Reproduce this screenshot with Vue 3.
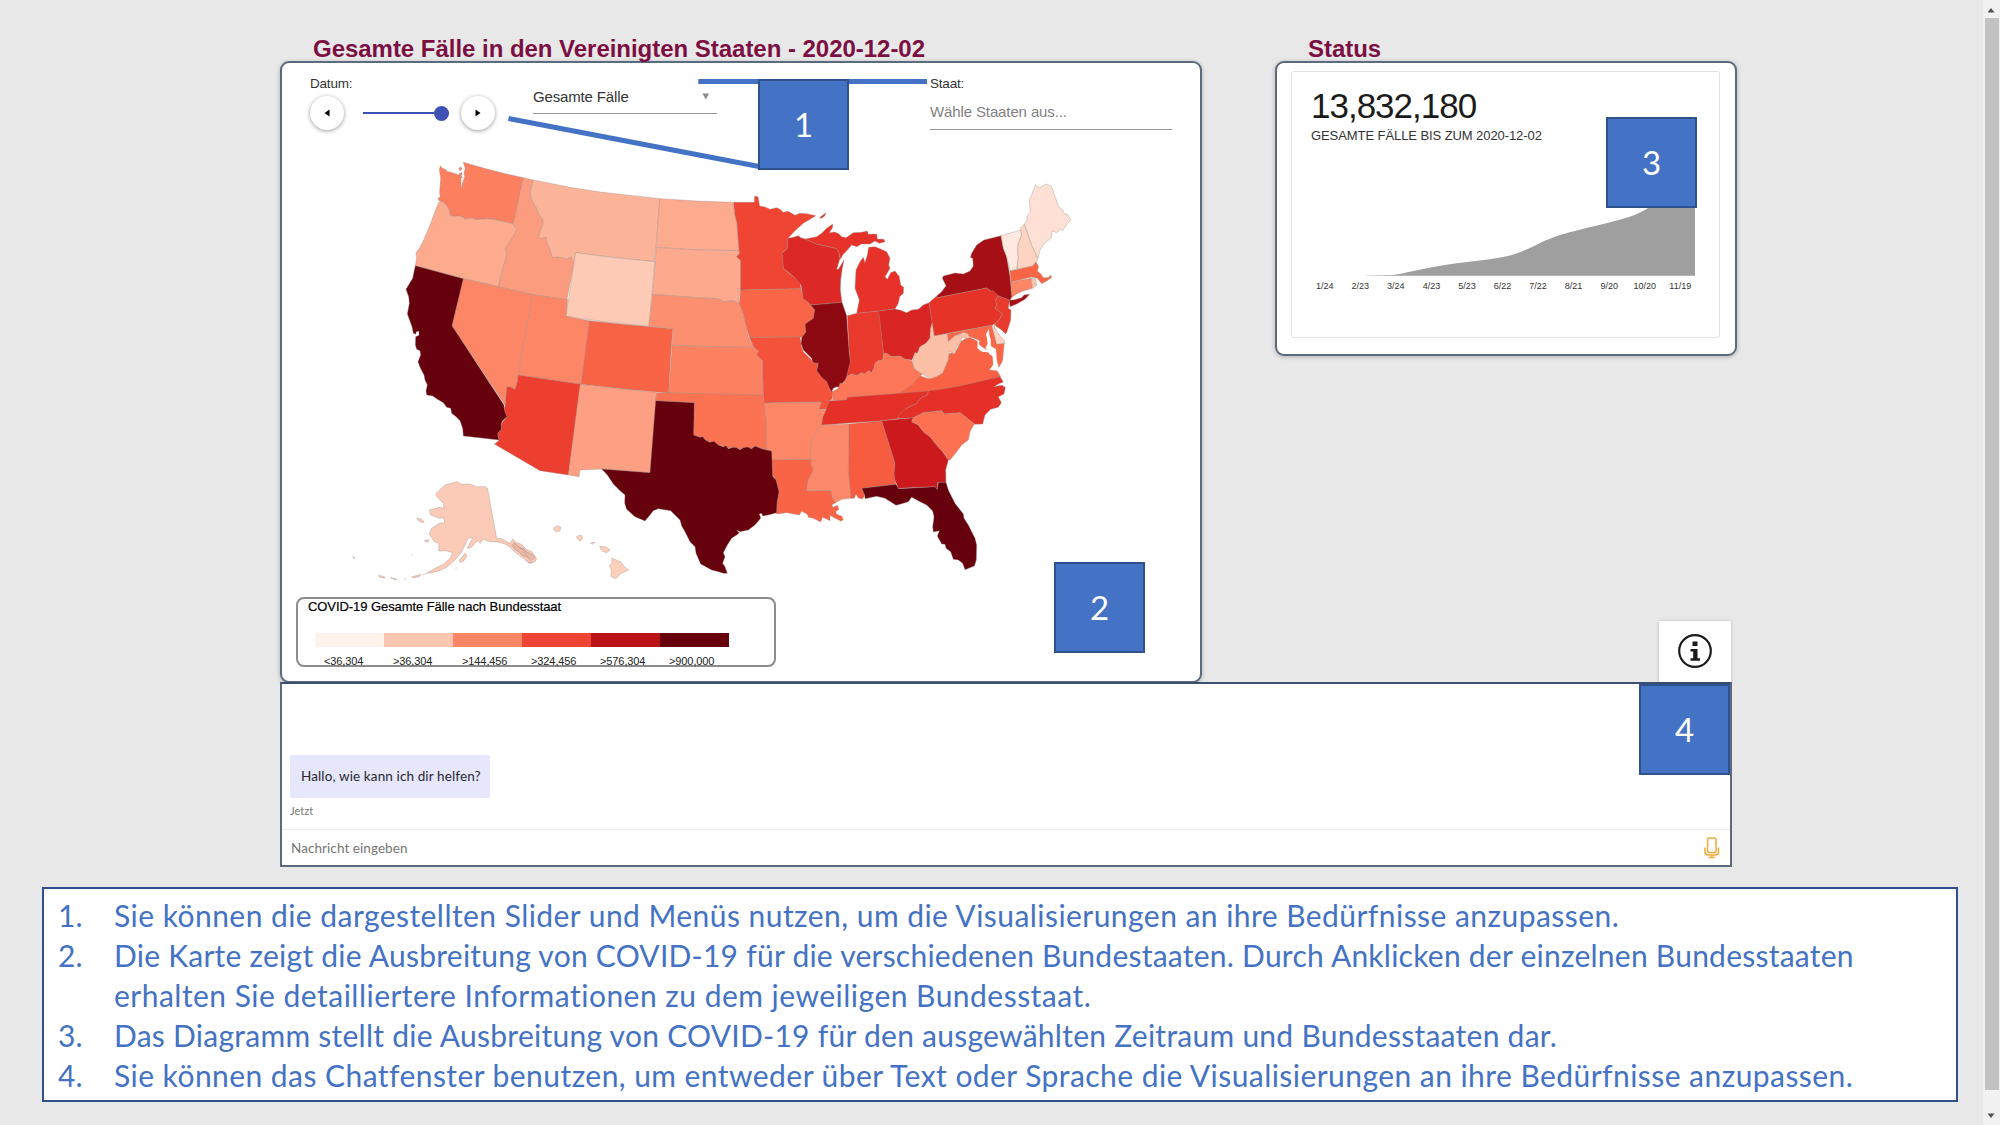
<script setup>
// Each region is traced on its own tile at three units per pixel; `tile` is the tile's top-left corner.
const tiles = { w: [400, 150], m: [640, 170], e: [840, 170], s: [640, 380], a: [340, 450] }
const place = (t) => `translate(${tiles[t][0]} ${tiles[t][1]}) scale(0.33333)`

const states = [
  { id: 'WA', tile: 'w', fill: '#fc7f5f', d: 'M121,48 L128,55 135,58 143,65 150,66 168,72 180,75 187,82 183,100 183,116 188,98 194,80 192,68 196,55 190,37 250,54 310,70 370,83 340,222 310,215 285,209 262,206 230,209 215,205 195,207 185,200 172,198 158,198 150,196 147,178 138,164 128,156 118,153 114,146 120,140 119,125 122,85 118,60Z M176,56 l6,-6 4,8 -6,4Z M178,70 l8,-2 0,8 -6,0Z' },
  { id: 'OR', tile: 'w', fill: '#fcab8f', d: 'M116,157 L128,156 138,164 147,178 150,196 158,198 172,198 185,200 195,207 215,205 230,209 262,206 285,209 340,222 351,238 343,255 335,268 326,282 316,298 322,308 295,410 190,386 46,347 50,325 48,308 60,292 72,268 90,225 105,185Z' },
  { id: 'ID', tile: 'w', fill: '#fc9c7f', d: 'M370,83 L400,90 391,125 393,140 398,155 408,170 414,188 429,210 430,222 420,245 416,260 425,266 438,261 441,275 450,300 458,322 475,321 485,323 500,327 513,319 517,330 523,335 501,449 398,434 295,410 322,308 316,298 326,282 335,268 343,255 351,238 340,222Z' },
  { id: 'MT', tile: 'w', fill: '#fcb499', d: 'M400,90 L510,112 600,126 780,146 764,335 640,322 527,308 523,335 517,330 513,319 500,327 485,323 475,321 458,322 450,300 441,275 438,261 425,266 416,260 420,245 430,222 429,210 414,188 408,170 398,155 393,140 391,125Z' },
  { id: 'WY', tile: 'w', fill: '#fdcab5', d: 'M527,308 L640,323 764,335 747,529 610,515 498,499Z' },
  { id: 'NV', tile: 'w', fill: '#fc8666', d: 'M190,386 L295,410 398,434 355,675 352,695 345,718 332,711 320,711 315,765 156,527Z' },
  { id: 'UT', tile: 'w', fill: '#fc8666', d: 'M398,434 L503,449 498,499 568,512 543,703 355,675Z' },
  { id: 'CO', tile: 'w', fill: '#f96346', d: 'M568,512 L660,522 818,536 812,620 806,729 690,719 543,703Z' },
  { id: 'AZ', tile: 'w', fill: '#ed3f2f', d: 'M355,675 L543,703 505,975 420,962 283,882 292,876 297,870 293,850 304,838 303,822 321,800 313,783 316,762 320,711 332,711 345,718 352,695Z' },
  { id: 'NM', tile: 'w', fill: '#fc9f82', d: 'M540,703 L690,719 769,727 768,752 757,900 750,968 605,957 540,960 537,980 505,975Z' },
  { id: 'CA', tile: 'w', fill: '#67000d', d: 'M46,347 L190,386 156,527 312,765 314,783 321,800 308,812 303,822 304,838 293,850 297,870 190,858 188,835 180,812 170,802 155,790 152,775 140,772 130,758 112,748 98,738 80,735 78,722 82,705 75,690 72,675 60,652 54,635 62,615 60,602 50,598 46,585 47,560 57,556 57,544 49,545 47,553 40,550 36,530 22,492 28,460 26,440 18,418 38,385 41,370Z' },
  { id: 'ND', tile: 'm', fill: '#fcab8f', d: 'M59,86 L170,93 278,97 281,115 285,135 291,160 293,190 298,242 170,240 49,232Z' },
  { id: 'SD', tile: 'm', fill: '#fca98d', d: 'M49,232 L170,240 298,242 290,260 302,272 302,360 297,385 298,402 285,394 275,392 250,395 240,388 228,386 130,380 37,373Z' },
  { id: 'NE', tile: 'm', fill: '#fc8f6f', d: 'M37,373 L130,380 228,386 240,388 250,395 275,392 285,394 298,402 310,430 315,455 322,480 325,500 342,532 220,530 96,526 98,476 27,469Z' },
  { id: 'KS', tile: 'm', fill: '#fc8262', d: 'M96,526 L220,530 342,532 356,543 350,555 368,572 370,677 230,674 86,669Z' },
  { id: 'MN', tile: 'm', fill: '#f04533', d: 'M280,97 L343,97 344,78 354,80 359,108 375,111 390,118 410,113 420,118 430,127 445,124 465,136 480,130 500,131 528,137 490,160 465,182 444,205 442,235 428,247 430,295 445,308 462,320 480,338 483,356 390,358 302,360 302,272 290,260 298,250 293,190 291,160 285,135Z' },
  { id: 'IA', tile: 'm', fill: '#f96547', d: 'M302,360 L483,356 488,375 490,388 500,393 512,405 524,420 520,445 495,462 500,478 495,490 490,503 480,501 328,502 322,480 315,455 310,430 298,402Z' },
  { id: 'MO', tile: 'm', fill: '#f5523b', d: 'M328,502 L480,501 485,530 490,545 515,570 518,578 535,580 530,602 560,635 570,660 580,665 576,688 568,692 562,718 537,718 543,696 372,699 370,675 368,572 350,555 356,543 342,532Z' },
  { id: 'WI', tile: 'm', fill: '#dc2925', d: 'M444,205 L460,202 475,197 482,203 495,207 510,213 530,222 575,232 590,236 597,248 600,265 595,282 590,298 596,297 612,270 606,300 602,330 601,360 606,397 512,405 500,393 490,388 483,345 462,320 430,295 428,260 426,250 442,235Z' },
  { id: 'IL', tile: 'm', fill: '#8d0912', d: 'M512,405 L606,397 620,437 628,550 632,575 626,600 618,630 608,638 607,655 590,650 580,655 575,665 568,655 560,635 545,622 530,602 535,580 518,578 515,565 490,540 483,520 485,503 498,485 495,462 520,445 524,420Z' },
  { id: 'MI', tile: 'm', fill: '#e63228', d: 'M495,207 L530,200 545,190 560,175 578,162 578,172 568,188 585,186 597,192 605,200 618,203 640,188 665,187 682,183 685,193 710,192 712,207 732,208 735,215 718,220 705,213 690,222 665,222 650,230 635,225 622,240 608,255 602,268 597,248 590,236 575,232 530,222Z M540,142 l18,-14 -4,10 -12,8Z M686,232 L705,230 720,236 740,245 750,265 746,285 750,295 735,320 742,328 752,308 765,303 778,320 782,345 791,352 790,370 779,380 775,400 765,417 718,423 650,430 658,390 645,355 648,300 660,275 670,262 675,278 682,255Z' },
  { id: 'IN', tile: 'e', fill: '#ea3a2d', d: 'M22,437 L50,430 118,423 131,550 128,570 115,572 105,580 102,595 95,608 85,602 75,612 65,608 50,617 35,612 20,620 31,575 28,550Z' },
  { id: 'OH', tile: 'e', fill: '#d92523', d: 'M116,423 L165,417 182,421 200,428 215,420 235,418 250,405 267,398 277,455 272,475 270,505 258,520 240,530 232,550 225,548 216,570 195,568 180,558 155,560 142,551 131,550Z' },
  { id: 'KY', tile: 'e', fill: '#fc7757', d: 'M-22,690 L-22,665 -5,655 0,640 10,640 20,620 35,612 50,617 65,608 75,612 85,602 95,608 102,595 105,580 115,572 128,570 131,550 142,551 155,560 180,558 195,568 216,572 222,595 247,612 215,645 205,674 100,684 22,690 20,694Z' },
  { id: 'VA', tile: 'e', fill: '#f96245', d: 'M182,668 L215,645 240,617 265,626 300,610 318,585 328,550 345,550 362,515 385,500 415,515 418,540 450,550 468,575 470,600 482,620 470,632 340,660 190,674Z' },
  { id: 'MD', tile: 'e', fill: '#fa6748', d: 'M322,491 L455,466 470,522 493,520 490,548 488,572 477,592 468,565 455,545 440,540 418,525 415,510 390,500 370,488 345,497 325,515Z' },
  { id: 'WV', tile: 'e', fill: '#fcbfa7', d: 'M278,457 L283,497 322,491 325,515 345,497 358,495 370,486 385,492 390,503 378,506 366,500 362,518 350,530 345,552 328,545 325,570 318,585 308,610 290,620 270,627 247,612 228,600 218,582 218,572 225,548 232,550 240,530 258,520 270,505 272,475Z' },
  { id: 'NY', tile: 'e', fill: '#a60f15', d: 'M290,378 L305,365 318,347 307,325 310,318 345,309 370,312 390,303 400,288 398,265 391,262 395,250 410,225 432,210 483,197 490,235 500,260 510,320 516,380 510,390 520,390 545,383 552,375 569,373 555,388 530,402 510,410 507,390 475,378 455,365 440,354 292,383Z' },
  { id: 'PA', tile: 'e', fill: '#e63328', d: 'M267,398 L290,378 292,383 440,354 450,362 460,362 475,378 467,390 470,405 466,415 487,432 478,448 462,464 283,497Z' },
  { id: 'NJ', tile: 'e', fill: '#e83a2d', d: 'M475,378 L508,390 505,415 513,420 512,450 500,488 496,491 485,480 467,468 465,462 478,448 487,432 466,415 470,405 467,390Z' },
  { id: 'DE', tile: 'e', fill: '#fdd2c0', d: 'M456,466 L463,462 465,475 480,498 494,512 493,520 470,523Z' },
  { id: 'VT', tile: 'e', fill: '#fee9e0', d: 'M483,197 L543,180 545,195 535,220 533,240 535,265 530,295 510,303 500,260 490,235Z' },
  { id: 'NH', tile: 'e', fill: '#fdd4c2', d: 'M541,175 L553,162 575,225 593,265 590,275 578,288 531,297 535,265 533,240 535,220 545,195Z' },
  { id: 'ME', tile: 'e', fill: '#fee0d4', d: 'M553,162 L562,150 560,140 571,125 568,92 587,45 597,54 618,42 635,50 655,108 668,120 673,132 682,133 693,150 680,163 668,182 663,177 650,188 637,182 633,205 615,218 605,232 600,240 594,265 575,225Z' },
  { id: 'MA', tile: 'e', fill: '#fa6546', d: 'M510,303 L578,288 588,276 596,290 592,303 603,312 610,323 628,322 630,315 636,322 620,333 605,341 592,325 575,321 513,336Z' },
  { id: 'CT', tile: 'e', fill: '#fc8666', d: 'M513,336 L573,325 577,355 550,363 530,372 516,382Z' },
  { id: 'RI', tile: 'e', fill: '#fcc3ac', d: 'M573,323 L584,321 591,345 577,355Z' },
  { id: 'OK', tile: 's', fill: '#fc7353', d: 'M50,38 L88,39 370,45 378,115 378,210 345,198 335,205 310,203 300,208 280,202 265,205 250,198 235,195 210,187 180,172 161,165 163,68 47,62Z' },
  { id: 'AR', tile: 's', fill: '#fc8666', d: 'M372,69 L543,66 537,88 558,90 548,112 545,135 525,165 515,190 513,238 396,240 395,213 378,210 378,115Z' },
  { id: 'LA', tile: 's', fill: '#f96446', d: 'M396,240 L513,238 514,255 521,270 505,300 500,332 573,331 577,350 587,368 575,375 580,382 592,376 597,388 587,395 590,403 605,408 610,418 604,424 580,412 570,406 570,422 555,415 548,412 542,426 520,415 505,412 502,403 485,394 478,405 440,398 410,402 411,370 417,335 405,295 398,285Z' },
  { id: 'MS', tile: 's', fill: '#fc8969', d: 'M545,135 L627,132 625,270 633,355 605,358 587,368 575,345 573,331 500,332 505,300 521,270 514,255 511,225 515,190 525,165Z' },
  { id: 'AL', tile: 's', fill: '#f75b40', d: 'M627,132 L725,122 765,250 762,280 768,313 665,325 674,345 668,357 655,354 648,342 643,355 633,355 625,270Z' },
  { id: 'GA', tile: 's', fill: '#cc191e', d: 'M725,122 L820,113 815,125 835,135 850,155 870,170 890,195 908,215 925,240 917,270 918,307 893,307 892,328 885,320 775,325 765,300 762,280 765,250Z' },
  { id: 'TN', tile: 's', fill: '#e43027', d: 'M568,62 L620,60 622,52 800,38 866,33 862,45 845,52 830,70 800,85 772,116 725,122 545,135 548,112 558,90Z' },
  { id: 'NC', tile: 's', fill: '#e43027', d: 'M866,33 L950,20 1080,-10 1090,6 1075,12 1062,20 1085,16 1096,22 1092,42 1075,50 1084,68 1075,82 1052,88 1035,105 1028,132 1005,133 960,98 912,102 905,92 850,98 820,113 772,116 785,95 800,85 830,70 845,52 862,45Z' },
  { id: 'SC', tile: 's', fill: '#fc7152', d: 'M820,113 L850,98 905,92 912,102 960,98 1003,132 990,155 985,180 965,195 950,215 930,240 925,240 908,215 890,195 870,170 850,155 835,135 815,125Z' },
  { id: 'TX', tile: 's', fill: '#67000d', d: 'M47,62 L163,68 161,165 180,172 188,170 196,180 210,187 222,184 235,195 250,200 258,197 265,206 280,202 290,203 300,209 310,203 322,201 335,206 345,198 370,208 395,213 398,288 408,300 417,335 411,370 410,398 385,405 368,408 365,400 358,402 362,415 345,435 325,450 300,455 290,450 298,459 290,465 275,475 262,495 250,518 255,530 248,550 255,560 262,580 250,580 235,575 215,570 182,552 168,520 165,500 150,485 135,455 125,438 120,420 92,392 55,386 40,392 30,405 15,423 -15,410 -40,388 -46,370 -45,345 -60,332 -80,312 -98,285 -115,267 30,278Z' },
  { id: 'FL', tile: 's', fill: '#67000d', d: 'M665,325 L768,313 776,326 885,320 892,328 895,307 918,307 925,330 945,370 970,402 972,415 985,435 1005,475 1010,495 1009,540 1003,558 975,569 968,550 955,540 940,538 932,515 918,505 915,493 905,492 892,468 898,452 880,456 878,440 882,410 878,393 860,375 840,365 815,352 805,365 780,373 768,376 735,355 710,349 675,356 674,345Z' },
  { id: 'AK', tile: 'a', fill: '#fccbb7', d: 'M290,128 L315,105 350,95 365,103 390,102 410,110 437,110 443,117 470,266 485,266 500,275 510,280 518,267 530,278 545,283 558,298 575,305 590,325 585,335 570,340 550,325 530,310 510,292 495,282 470,275 450,275 430,268 420,280 412,272 395,292 382,295 398,263 385,264 375,285 365,305 345,330 320,352 290,365 260,370 285,355 310,343 330,325 338,308 318,302 296,303 297,280 283,275 268,252 275,235 298,220 314,218 312,203 298,205 272,195 268,180 300,172 312,175 310,160 288,137Z M231,205 l12,2 10,8 -6,3 -12,-6Z M254,270 l12,-1 -2,8 -8,-2Z M358,330 l18,-20 5,8 -10,15 -10,4Z M38,320 l6,1 -2,5Z M116,376 l8,2 12,4 -4,2 -14,-3Z M150,383 l12,2 10,4 -12,-2Z M192,387 l8,0 M215,381 l28,-8 -4,6 -18,5Z M246,376 l14,-6 M274,371 l5,2 M303,364 l4,-2 M346,355 l5,-1 M214,313 l4,2' },
  { id: 'AK islands', tile: 'a', fill: '#e9b8a6', d: 'M515,285 l10,-5 15,15 12,0 10,12 15,6 8,12 -12,6 -12,-10 -14,-4 -10,-12 -12,-6Z M520,275 l14,14 12,6 14,20 10,12 M556,330 l12,10 8,-4' },
  { id: 'HI', tile: 'a', fill: '#fdd0bc', d: 'M640,235 l12,-8 11,5 -4,12 -14,0Z M709,260 l14,-5 5,9 -7,9 -8,-6Z M751,280 l14,-4 -6,7Z M779,288 l8,2 12,1 11,9 -10,8 -12,-4 -6,-6Z M815,324 l28,12 9,13 13,11 -20,10 -19,16 -13,-7 1,-20 -6,-12 8,-8Z' },
]

const water = [
  { tile: 'e', d: 'M447,476 L438,492 441,505 443,522 436,535 450,545 447,552 458,558 459,585 448,600 478,602 473,590 470,565 468,538 453,528 452,508 448,495Z' },
  { tile: 'e', d: 'M413,510 l6,4 -3,8 14,16 22,4 -2,5 -24,-2 -14,-10Z' },
  { tile: 'w', d: 'M184,84 l3,0 -3,32Z' },
]

const legend = [
  ['#fff2eb', '<36,304'], ['#fcc6b0', '>36,304'], ['#fc8767', '>144,456'],
  ['#ee4434', '>324,456'], ['#ba1419', '>576,304'], ['#67000d', '>900,000'],
]
const months = ['1/24', '2/23', '3/24', '4/23', '5/23', '6/22', '7/22', '8/21', '9/20', '10/20', '11/19']
const notes = [
  ['Sie können die dargestellten Slider und Menüs nutzen, um die Visualisierungen an ihre Bedürfnisse anzupassen.'],
  ['Die Karte zeigt die Ausbreitung von COVID-19 für die verschiedenen Bundestaaten. Durch Anklicken der einzelnen Bundesstaaten', 'erhalten Sie detailliertere Informationen zu dem jeweiligen Bundesstaat.'],
  ['Das Diagramm stellt die Ausbreitung von COVID-19 für den ausgewählten Zeitraum und Bundesstaaten dar.'],
  ['Sie können das Chatfenster benutzen, um entweder über Text oder Sprache die Visualisierungen an ihre Bedürfnisse anzupassen.'],
]
</script>

<template>
  <div class="page">
    <main class="content">
      <div class="panels">
        <section class="col-map">
          <h1 class="title">Gesamte Fälle in den Vereinigten Staaten - 2020-12-02</h1>
          <div class="card map-card">
            <div class="controls">
              <div class="date">
                <span class="label">Datum:</span>
                <div class="slider-row">
                  <button class="round"><svg width="8" height="10"><path d="M6.500 1.500v7L1.500 5z" /></svg></button>
                  <div class="slider"><i></i></div>
                  <button class="round"><svg width="8" height="10"><path d="M1.500 1.500v7l5-3.500z" /></svg></button>
                </div>
              </div>
              <div class="select"><span>Gesamte Fälle</span><svg width="8" height="7"><path d="M0.500 0.500h6.500l-3.200 6z" fill="#888" /></svg></div>
              <div class="state">
                <span class="label">Staat:</span>
                <div class="input">Wähle Staaten aus...</div>
              </div>
            </div>
            <svg class="map" viewBox="282 152 916 440" width="916" height="440">
              <path v-for="s in states" :key="s.id" :d="s.d" :fill="s.fill" :transform="place(s.tile)" />
              <path v-for="(w, i) in water" :key="i" class="water" :d="w.d" :transform="place(w.tile)" />
            </svg>
            <div class="legend">
              <p>COVID-19 Gesamte Fälle nach Bundesstaat</p>
              <ul>
                <li v-for="[c, t] in legend" :key="t"><i :style="{ background: c }"></i><span>{{ t }}</span></li>
              </ul>
            </div>
          </div>
        </section>
        <section class="col-status">
          <h2 class="title">Status</h2>
          <div class="card status-card">
            <div class="inner">
              <strong>13,832,180</strong>
              <p>GESAMTE FÄLLE BIS ZUM 2020-12-02</p>
              <svg class="chart" width="390" height="78" viewBox="0 0 390 78">
                <path fill="#9f9f9f" d="M57 76.500 L84 76 C98 74 110 70 130 67 C150 63.500 175 61.500 194 58 C216 54 229 43 251 36 C275 29 297 25 320 18 C334 13.500 342 7 350 2 L386 0 V76.700 H57Z" />
              </svg>
              <div class="months"><span v-for="m in months" :key="m">{{ m }}</span></div>
            </div>
          </div>
        </section>
      </div>
      <section class="chat">
        <div class="log">
          <div class="bubble">Hallo, wie kann ich dir helfen?</div>
          <small>Jetzt</small>
        </div>
        <div class="entry">
          <span>Nachricht eingeben</span>
          <svg width="16" height="22" viewBox="0 0 16 22" fill="none" stroke="#f5a83b" stroke-width="1.500">
            <rect x="3.600" y="1" width="8.400" height="14.500" rx="1.200" />
            <path d="M1 10.500v4.500q0 3 3 3h7.500q3 0 3-3v-4.500M7.800 18v2.500M4.500 20.500h6.500" />
          </svg>
        </div>
      </section>
    </main>
    <ol class="notes">
      <li v-for="(n, i) in notes" :key="i">
        <b>{{ i + 1 }}.</b>
        <div><span v-for="(l, k) in n" :key="k" :class="'line line-' + i + k">{{ l }}</span></div>
      </li>
    </ol>

    <svg class="callouts" width="2000" height="200" stroke="#4472c4" stroke-width="5">
      <path d="M698.300 81.500H927M508.500 118.500L759 166.500" />
    </svg>
    <div class="badge b1">1</div>
    <div class="badge b2">2</div>
    <div class="badge b3">3</div>
    <div class="badge b4">4</div>
    <div class="info">
      <svg width="36" height="36" viewBox="0 0 36 36">
        <circle cx="18" cy="18" r="15.800" fill="none" stroke="#1b1b1b" stroke-width="2.200" />
        <path fill="#1b1b1b" d="M15.500 8.500h5v4.600h-5zM13.500 16h7v9.300h2.500v2.500h-9.500v-2.500h2.700v-6.800h-2.700z" />
      </svg>
    </div>
    <div class="scrollbar">
      <svg width="9" height="6"><path d="M0.500 5.500h7l-3.500-4.500z" fill="#505050" /></svg>
      <i></i>
      <svg width="9" height="6"><path d="M0.500 0.500h7l-3.500 4.500z" fill="#505050" /></svg>
    </div>
  </div>
</template>

<style>
body { margin: 0; overflow: hidden; }
</style>

<style scoped>
* { box-sizing: border-box; }
p, h1, h2, ul, ol { margin: 0; padding: 0; list-style: none; }
.page { position: relative; width: 2000px; height: 1125px; background: #e8e8e8; font-family: "Liberation Sans", Arial, sans-serif; color: #333; overflow: hidden; }
.content { padding: 28px 0 0 280px; width: 1740px; }
.panels { display: flex; justify-content: space-between; height: 654px; width: 1457px; }
.col-map { width: 922px; }
.col-status { width: 462px; }
.title { height: 33px; padding-left: 33px; font-size: 24px; line-height: 41px; font-weight: 700; color: #7c0f42; white-space: nowrap; position: relative; z-index: 1; letter-spacing: -0.030px; }
.card { background: #fff; border: 2px solid #5a6b80; border-radius: 9px; box-shadow: 0 1px 4px rgba(0,0,0,.25); }
.map-card { height: 622px; display: flex; flex-direction: column; }
.controls { height: 89px; flex: none; display: flex; padding-left: 28px; }
.label { font-size: 13.500px; line-height: 16px; display: block; letter-spacing: -0.200px; }
.date { width: 223px; padding-top: 13px; }
.slider-row { display: flex; align-items: center; margin-top: 4px; height: 34px; }
.round { width: 34px; height: 34px; border: 0; border-radius: 50%; background: #fff; box-shadow: 0 1px 4px rgba(0,0,0,.4); display: flex; align-items: center; justify-content: center; padding: 0; }
.slider { width: 86px; height: 2px; margin: 0 12px 0 19px; background: #3f51b5; display: flex; align-items: center; justify-content: flex-end; }
.slider i { width: 15px; height: 15px; border-radius: 50%; background: #3f51b5; flex: none; }
.select { width: 184px; height: 31px; margin-top: 20px; border-bottom: 1px solid #949494; display: flex; justify-content: space-between; align-items: center; padding-right: 7px; font-size: 15px; line-height: 28px; padding-bottom: 3px; letter-spacing: -0.150px; }
.state { margin-left: 213px; padding-top: 13px; }
.input { width: 242px; height: 38px; border-bottom: 1px solid #949494; color: #828282; font-size: 15px; line-height: 39px; letter-spacing: -0.120px; }
.map { flex: none; display: block; }
.map path { stroke: #9a8a86; stroke-opacity: .75; stroke-width: 1.500px; stroke-linejoin: round; }
.map path.water { fill: #fff; stroke: none; }
.legend { margin: 5px 0 0 14px; width: 480px; height: 70px; border: 2px solid #8c8c8c; border-radius: 8px; padding: 0 0 0 10px; }
.legend p { font-size: 13px; line-height: 15px; color: #000; -webkit-text-stroke: 0.200px #000; white-space: nowrap; letter-spacing: -0.070px; }
.legend ul { display: flex; margin: 19px 0 0 7px; }
.legend li { width: 69px; }
.legend i { display: block; height: 14px; }
.legend span { display: block; font-size: 11px; line-height: 14px; margin-top: 7px; padding-left: 9px; color: #222; letter-spacing: -0.100px; }
.status-card { height: 295px; padding: 8px 15px 0 14px; }
.inner { height: 267px; border: 1px solid #e2e2e2; border-radius: 3px; padding-left: 19px; }
.inner strong { display: block; font-weight: 400; font-size: 35px; line-height: 36px; margin-top: 16px; color: #1b1b1b; letter-spacing: -1px; }
.inner p { font-size: 13px; line-height: 16px; margin-top: 4px; white-space: nowrap; letter-spacing: -0.080px; }
.chart { display: block; margin: 55px 0 0 -2px; }
.months { display: flex; margin: 3px 0 0 -4px; width: 391px; }
.months span { flex: 1; text-align: center; font-size: 9px; line-height: 12px; color: #333; }
.chat { height: 185px; width: 1452px; border: 2px solid #5a6b80; border-top-color: #3b4f70; background: #fff; font-family: Lato, sans-serif; position: relative; }
.log { height: 146px; border-bottom: 1px solid #eee; padding: 71px 0 0 8px; }
.bubble { width: 200px; height: 43px; background: #e6e6fd; border-radius: 2px; padding-left: 11px; line-height: 43px; font-size: 13.500px; color: #26262c; white-space: nowrap; letter-spacing: 0.120px; }
.log small { display: block; margin-top: 5px; font-size: 11px; line-height: 15px; color: #777; }
.entry { height: 35px; display: flex; align-items: center; justify-content: space-between; padding: 0 10px 0 9px; font-size: 13.500px; color: #757575; letter-spacing: 0.070px; }
.notes { margin: 20px 0 0 42px; width: 1916px; height: 215px; border: 2px solid #2f528f; background: #fff; padding: 6px 0 0 14px; font-family: Lato, sans-serif; font-size: 30px; line-height: 40px; color: #4472c4; }
.notes li { display: flex; }
.notes b { width: 56px; font-weight: 400; }
.line { display: block; white-space: nowrap; font-variant-ligatures: none; }
.line-00 { letter-spacing: 0.450px; }
.line-10 { letter-spacing: 0.245px; }
.line-11 { letter-spacing: 0.480px; }
.line-20 { letter-spacing: 0.265px; }
.line-30 { letter-spacing: 0.440px; }
.callouts { position: absolute; left: 0; top: 0; z-index: 2; }
.badge { position: absolute; z-index: 3; width: 91px; height: 91px; background: #4472c4; border: 2px solid #2f528f; color: #fff; display: flex; align-items: center; justify-content: center; font: 33px/1 Lato, sans-serif; }
.b1 { left: 758px; top: 79px; }
.b2 { left: 1054px; top: 562px; }
.b3 { left: 1606px; top: 117px; }
.b4 { left: 1639px; top: 684px; }
.info { position: absolute; left: 1659px; top: 621px; width: 72px; height: 61px; background: #fff; box-shadow: 0 0 3px rgba(0,0,0,.2); padding: 12px 0 0 18px; }
.scrollbar { position: absolute; right: 0; top: 0; width: 17px; height: 1125px; background: #f1f1f1; display: flex; flex-direction: column; align-items: center; padding: 7px 0 6px; justify-content: space-between; }
.scrollbar i { width: 14px; height: 1072px; background: #c1c1c1; margin-bottom: 18px; }
</style>
